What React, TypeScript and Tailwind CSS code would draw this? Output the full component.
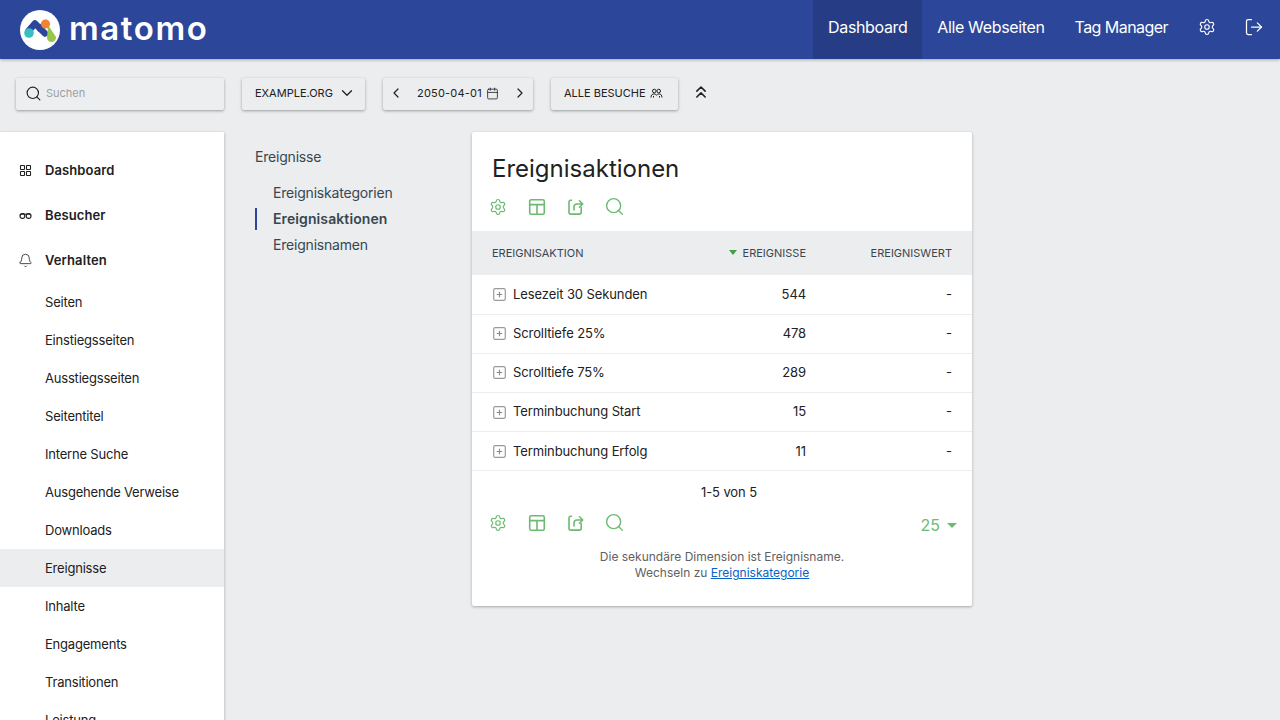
import {
  Bell,
  Calendar,
  ChevronDown,
  ChevronLeft,
  ChevronRight,
  ChevronsUp,
  LogOut,
  Search,
  Settings,
} from "lucide-react";

const subItems = [
  "Seiten",
  "Einstiegsseiten",
  "Ausstiegsseiten",
  "Seitentitel",
  "Interne Suche",
  "Ausgehende Verweise",
  "Downloads",
  "Ereignisse",
  "Inhalte",
  "Engagements",
  "Transitionen",
  "Leistung",
];

const rows = [
  { name: "Lesezeit 30 Sekunden", count: 544 },
  { name: "Scrolltiefe 25%", count: 478 },
  { name: "Scrolltiefe 75%", count: 289 },
  { name: "Terminbuchung Start", count: 15 },
  { name: "Terminbuchung Erfolg", count: 11 },
];

const Logo = () => (
  <svg width="40" height="40" viewBox="0 0 40 40" className="shrink-0">
    <circle cx="20" cy="20" r="20" fill="#fff" />
    <path d="M8.5 21 L15 13.5 L25 23.5" fill="none" stroke="#2c4699" strokeWidth="6.5" strokeLinecap="round" strokeLinejoin="round" />
    <path d="M20 19 L25.5 13" fill="none" stroke="#2c4699" strokeWidth="6" strokeLinecap="round" />
    <path d="M28 15 L36 27 A4.5 4.5 0 0 1 27 28 Z" fill="#95c748" />
    <circle cx="9" cy="23" r="4.8" fill="#35bfc0" />
    <circle cx="25.5" cy="14" r="4.6" fill="#f38334" />
  </svg>
);

const TableIcon = () => (
  <svg width="18" height="18" viewBox="0 0 18 18" fill="none" stroke="currentColor" strokeWidth="1.6">
    <rect x="1.7" y="1.7" width="14.6" height="14.6" rx="1.6" />
    <path d="M1.7 6.6h14.6M9 6.6v9.7" />
  </svg>
);

const ShareIcon = () => (
  <svg width="18" height="18" viewBox="0 0 18 18" fill="none" stroke="currentColor" strokeWidth="1.6" strokeLinecap="round" strokeLinejoin="round">
    <path d="M4.5 2.2h-1A1.8 1.8 0 0 0 2 4v10.3a1.8 1.8 0 0 0 1.8 1.8h8.6a1.8 1.8 0 0 0 1.8-1.8V9.5" />
    <path d="M7 12V9a3 3 0 0 1 3-3h5.5M12.5 2.8 15.7 6l-3.2 3.2" />
  </svg>
);

const GridIcon = () => (
  <svg width="15" height="15" viewBox="0 0 15 15" fill="none" stroke="currentColor" strokeWidth="1.1">
    <rect x="2.5" y="2.5" width="4" height="4" rx="0.5" />
    <rect x="8.5" y="2.5" width="4" height="4" rx="0.5" />
    <rect x="2.5" y="8.5" width="4" height="4" rx="0.5" />
    <rect x="8.5" y="8.5" width="4" height="4" rx="0.5" />
  </svg>
);

const GlassesIcon = () => (
  <svg width="15" height="15" viewBox="0 0 15 15" fill="none" stroke="currentColor" strokeWidth="1.1">
    <circle cx="4.4" cy="8" r="2.4" />
    <circle cx="10.6" cy="8" r="2.4" />
    <path d="M2 7.2C2.6 5.8 4.7 5.6 7.5 6.2c2.8-.6 4.9-.4 5.5 1" />
  </svg>
);

const VisitorsIcon = () => (
  <svg width="13" height="13" viewBox="0 0 13 13" fill="none" stroke="currentColor" strokeWidth="1">
    <circle cx="4.3" cy="4" r="1.8" />
    <circle cx="8.7" cy="4" r="1.8" />
    <path d="M1 10.5c0-2.4 1.3-3.6 3-3.6.9 0 1.8.4 2.5 1.2.7-.8 1.6-1.2 2.5-1.2 1.7 0 3 1.2 3 3.6M3.5 10.5V9M9.5 10.5V9" />
  </svg>
);

const PlusBox = () => (
  <svg width="13" height="13" viewBox="0 0 13 13" fill="none" stroke="#9a9a9a" strokeWidth="1.2" className="shrink-0">
    <rect x="0.7" y="0.7" width="11.6" height="11.6" rx="1.6" />
    <path d="M6.5 3.7v5.6M3.7 6.5h5.6" stroke="#8a8a8a" />
  </svg>
);

const ReportIcons = () => (
  <div className="flex items-center gap-[21px] text-[#6dba72]">
    <Settings size={18} strokeWidth={1.6} />
    <TableIcon />
    <ShareIcon />
    <Search size={21} strokeWidth={1.6} className="-ml-[2px]" />
  </div>
);

const App = () => (
  <div
    className="h-[720px] w-[1280px] overflow-hidden bg-[#ecedef] text-[#212121]"
    style={{ fontFamily: "Inter, 'Liberation Sans', sans-serif" }}
  >
    <header className="relative z-10 flex h-[59px] items-center justify-between bg-[#2c4699] pl-5 shadow-[0_1px_3px_rgba(0,0,0,0.3)]">
      <div className="flex items-center gap-[9px]">
        <Logo />
        <span className="pb-[3px] text-[33px] leading-none font-semibold tracking-[1.6px] text-white">matomo</span>
      </div>
      <nav className="flex h-full items-center text-base tracking-[-0.35px] text-white">
        <a className="flex h-full w-[109px] items-center justify-center bg-[#263d85] pb-[5px]">Dashboard</a>
        <a className="ml-[15px] pb-[5px]">Alle Webseiten</a>
        <a className="ml-[30px] pb-[5px] tracking-[-0.55px]">Tag Manager</a>
        <Settings size={18} strokeWidth={1.5} className="mb-[5px] ml-[30px]" />
        <LogOut size={20} strokeWidth={1.5} className="mr-[16px] mb-[5px] ml-[28px]" />
      </nav>
    </header>

    <div className="flex h-[73px] items-start pt-[19px] pl-4 text-[11px] text-[#212121]">
      <div className="flex h-[32px] w-[208px] items-center gap-[4px] rounded-[2px] bg-[#edeef0] pb-[1px] pl-[9px] text-[#9e9e9e] shadow-[0_1px_3px_rgba(0,0,0,0.35)]">
        <Search size={17} strokeWidth={1.6} className="text-[#212121]" />
        Suchen
      </div>
      <div className="ml-[18px] flex h-[32px] w-[123px] items-center gap-[5px] rounded-[2px] pb-[2px] pl-[13px] shadow-[0_1px_3px_rgba(0,0,0,0.35)]">
        EXAMPLE.ORG
        <ChevronDown size={18} strokeWidth={1.7} />
      </div>
      <div className="ml-[18px] flex h-[32px] w-[150px] items-center rounded-[2px] pb-[2px] pl-[5px] shadow-[0_1px_3px_rgba(0,0,0,0.35)]">
        <ChevronLeft size={16} strokeWidth={1.8} />
        <span className="ml-[13px] tracking-[0.2px]">2050-04-01</span>
        <Calendar size={13} strokeWidth={1.5} className="ml-[4px]" />
        <ChevronRight size={16} strokeWidth={1.8} className="ml-[13px]" />
      </div>
      <div className="ml-[18px] flex h-[32px] w-[127px] items-center gap-[4px] rounded-[2px] pb-[2px] pl-[13px] shadow-[0_1px_3px_rgba(0,0,0,0.35)]">
        ALLE BESUCHE
        <VisitorsIcon />
      </div>
      <ChevronsUp size={20} strokeWidth={1.9} className="mt-[4px] ml-[13px]" />
    </div>

    <div className="flex items-start">
      <aside className="h-[588px] w-[224px] shrink-0 overflow-hidden bg-white pt-[16px] shadow-[0_1px_3px_rgba(0,0,0,0.3)]">
        <div className="flex h-[45px] items-center gap-[12px] pl-[18px] text-[13px] font-semibold tracking-[0.1px]">
          <GridIcon />
          Dashboard
        </div>
        <div className="flex h-[45px] items-center gap-[12px] pl-[18px] text-[13px] font-semibold tracking-[0.1px]">
          <GlassesIcon />
          Besucher
        </div>
        <div className="flex h-[45px] items-center gap-[12px] pl-[18px] text-[13px] font-semibold tracking-[0.1px]">
          <Bell size={15} strokeWidth={1.3} />
          Verhalten
        </div>
        <ul className="text-[13px] tracking-[-0.2px]">
          {subItems.map((item) => (
            <li
              key={item}
              className={`flex h-[38px] items-center pt-[2px] pl-[45px] ${item === "Ereignisse" ? "bg-[#ecedef]" : ""}`}
            >
              {item}
            </li>
          ))}
        </ul>
      </aside>

      <div className="w-[248px] shrink-0 pt-[16px] pl-[31px] text-sm tracking-[-0.2px] text-[#37474f]">
        <div className="leading-[18px]">Ereignisse</div>
        <ul className="mt-[14px]">
          <li className="flex h-[26px] items-center pl-[18px]">Ereigniskategorien</li>
          <li className="flex h-[26px] items-center font-semibold tracking-[0.1px]">
            <span className="h-[22px] w-[2px] bg-[#2c4699]" />
            <span className="ml-4">Ereignisaktionen</span>
          </li>
          <li className="flex h-[26px] items-center pl-[18px]">Ereignisnamen</li>
        </ul>
      </div>

      <main className="h-[474px] w-[500px] shrink-0 rounded-[2px] bg-white shadow-[0_1px_3px_rgba(0,0,0,0.3)]">
        <h2 className="pt-[22px] pl-5 text-2xl leading-[30px] font-normal">Ereignisaktionen</h2>
        <div className="mt-[12px] pl-[17px]">
          <ReportIcons />
        </div>

        <table className="mt-[14px] w-full border-collapse text-[13px] tracking-[-0.1px]">
          <thead>
            <tr className="h-[44px] bg-[#ecedef] text-[11px] tracking-normal text-[#37474f]">
              <th className="pl-5 text-left font-normal">EREIGNISAKTION</th>
              <th className="w-[150px] text-right font-normal">
                <span className="mr-[6px] inline-block border-x-[4px] border-t-[5px] border-x-transparent border-t-[#43a047] align-[2px]" />
                EREIGNISSE
              </th>
              <th className="w-[166px] pr-5 text-right font-normal">EREIGNISWERT</th>
            </tr>
          </thead>
          <tbody>
            {rows.map((r) => (
              <tr key={r.name} className="h-[39.2px] border-b border-[#ecedef]">
                <td className="pl-[21px]">
                  <span className="flex items-center gap-[7px]">
                    <PlusBox />
                    {r.name}
                  </span>
                </td>
                <td className="text-right">{r.count}</td>
                <td className="pr-5 text-right">-</td>
              </tr>
            ))}
          </tbody>
        </table>

        <div className="mt-[13px] pl-[14px] text-center text-[13px] leading-4 tracking-[-0.1px]">1-5 von 5</div>
        <div className="mt-[12px] flex items-start justify-between pr-[15px] pl-[17px]">
          <ReportIcons />
          <div className="mt-[3px] flex items-center gap-[7px] text-base leading-5 text-[#6dba72]">
            25
            <span className="inline-block border-x-[5px] border-t-[5px] border-x-transparent border-t-[#6dba72]" />
          </div>
        </div>
        <p className="mt-[14px] text-center text-xs leading-4 text-[#616161]">
          Die sekundäre Dimension ist Ereignisname.
          <br />
          Wechseln zu <a className="text-[#0b62c4] underline">Ereigniskategorie</a>
        </p>
      </main>
    </div>
  </div>
);

export default App;
